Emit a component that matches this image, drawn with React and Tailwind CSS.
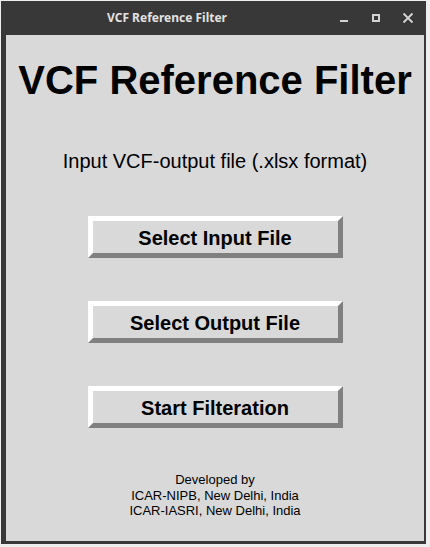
export default function App() {
  const btn =
    "w-[255px] h-[42px] border-[5px] border-t-white border-l-white border-r-[#808080] border-b-[#808080] bg-[#d9d9d9] flex items-center justify-center text-[20px] font-bold text-black leading-none pt-[1px]";
  return (
    <div className="w-[430px] h-[547px] bg-[#eeeeee] pt-[1px] pl-[1px]" style={{ fontFamily: '"Liberation Sans", Arial, sans-serif' }}>
      <div className="w-[425px] h-[543px] bg-[#383838] flex flex-col">
        <div className="h-[34px] flex items-center">
          <span
            className="pl-[106px] text-[12px] font-bold text-[#e2e2e2]"
            style={{ fontFamily: '"Noto Sans", sans-serif' }}
          >
            VCF Reference Filter
          </span>
          <div className="ml-auto mr-[2px] flex items-center">
            <div className="w-[32px] h-[34px] flex items-center justify-center">
              <svg width="10" height="10" viewBox="0 0 10 10">
                <rect x="1" y="7" width="8" height="2" fill="#d4d4d4" />
              </svg>
            </div>
            <div className="w-[32px] h-[34px] flex items-center justify-center">
              <svg width="10" height="10" viewBox="0 0 10 10">
                <rect x="2" y="2" width="6" height="6" fill="none" stroke="#d4d4d4" strokeWidth="2" />
              </svg>
            </div>
            <div className="w-[32px] h-[34px] flex items-center justify-center">
              <svg width="12" height="12" viewBox="0 0 12 12">
                <path d="M1.5 1.5 L10.5 10.5 M10.5 1.5 L1.5 10.5" stroke="#d4d4d4" strokeWidth="1.8" />
              </svg>
            </div>
          </div>
        </div>
        <div className="ml-[5px] mr-[2px] mb-[3px] flex-1 bg-[#d9d9d9] flex flex-col items-center text-black">
          <div className="pt-[22px] text-[40px] leading-[46px] font-bold">VCF Reference Filter</div>
          <div className="mt-[46px] text-[20px] leading-[24px]">Input VCF-output file (.xlsx format)</div>
          <div className={`${btn} mt-[43px]`}>Select Input File</div>
          <div className={`${btn} mt-[43px]`}>Select Output File</div>
          <div className={`${btn} mt-[43px]`}>Start Filteration</div>
          <div className="mt-[44px] text-[13px] leading-[15.5px] text-center">
            <div>Developed by</div>
            <div>ICAR-NIPB, New Delhi, India</div>
            <div>ICAR-IASRI, New Delhi, India</div>
          </div>
        </div>
      </div>
    </div>
  );
}
